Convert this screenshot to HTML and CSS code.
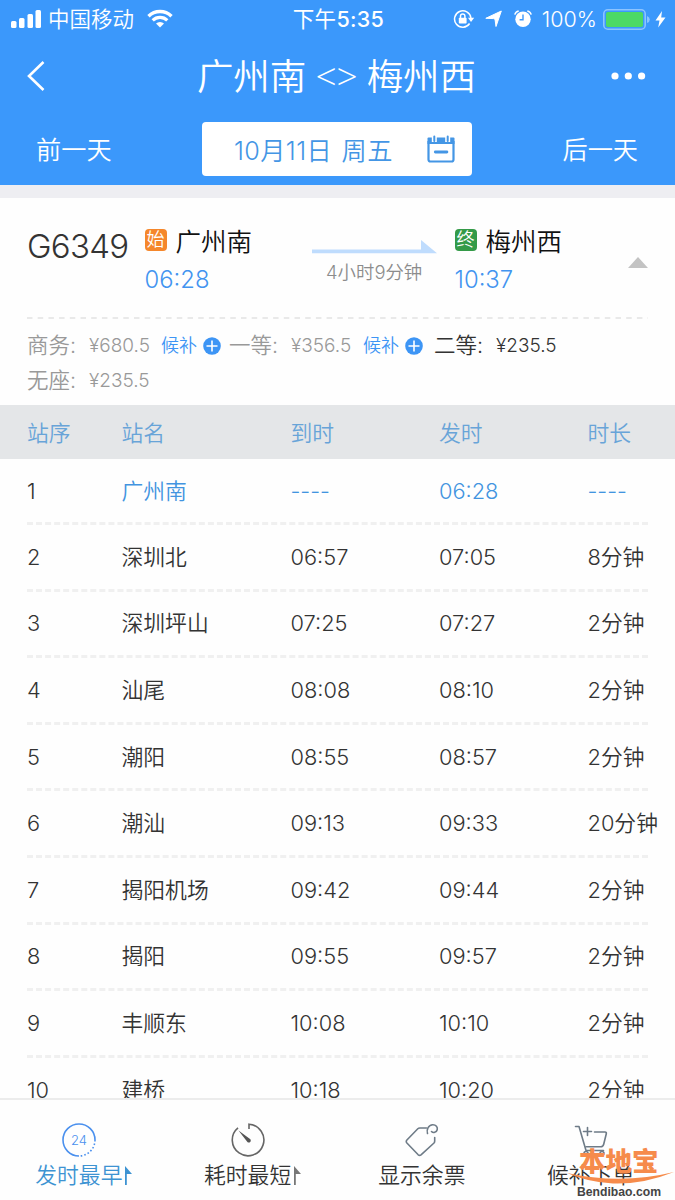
FILE: index.html
```html
<!DOCTYPE html>
<html lang="zh-CN">
<head>
  <meta charset="UTF-8" />
  <meta name="viewport" content="width=device-width, initial-scale=1.0"/>
  <title>广州南 - 梅州西</title>
  <link rel="stylesheet" href="styles.css">
</head>
<body>
  <div class="app">

    <header>
      <div class="status-bar">
        <div class="status-left">
          <svg width="31" height="19" viewBox="0 0 31 19" fill="#fff">
            <rect x="0" y="11" width="5.5" height="7" rx="1.5"/>
            <rect x="8" y="8" width="5.5" height="10" rx="1.5"/>
            <rect x="16.5" y="4" width="5.5" height="14" rx="1.5"/>
            <rect x="24.5" y="0" width="5.5" height="18" rx="1.5"/>
          </svg>
          <span class="carrier">中国移动</span>
          <svg class="wifi" width="26" height="19" viewBox="0 0 26 19" fill="none" stroke="#fff">
            <path d="M1.5 7.2a16.5 16.5 0 0 1 23 0" stroke-width="3.4"/>
            <path d="M5.7 11.4a10.4 10.4 0 0 1 14.6 0" stroke-width="3.2"/>
            <path d="M13 18.5l-4-4a5.8 5.8 0 0 1 8 0z" fill="#fff" stroke="none"/>
          </svg>
        </div>
        <div class="clock">下午<b>5:35</b></div>
        <div class="status-right">
          <svg class="lock" width="22" height="20" viewBox="0 0 22 20" fill="none" stroke="#fff" stroke-width="1.5">
            <path d="M16.6 14.5A8.2 8.2 0 1 1 17.9 9"/>
            <path d="M15 8.8h6.2L18 13z" fill="#fff" stroke="none"/>
            <rect x="5.8" y="8.8" width="7.8" height="5.8" rx=".8" fill="#fff" stroke="none"/>
            <path d="M7.5 9V7.1a2.2 2.2 0 0 1 4.4 0V9"/>
          </svg>
          <svg class="arrow" width="17" height="18" viewBox="0 0 17 18" fill="#fff" stroke="#fff" stroke-linejoin="round">
            <path d="M16.3 1L11 16.5 10 9.2 8.5 8.600.8 8.300z"/>
          </svg>
          <svg class="alarm" width="18" height="18" viewBox="0 0 18 18" fill="none" stroke="#fff">
            <circle cx="9" cy="9.3" r="7.7" fill="#fff" stroke="none"/>
            <path d="M9 4.5v5.3H5.6" stroke="#3b98fb" stroke-width="1.4"/>
            <path d="M.8 4.6Q1.5 1.7 4.7 1M17.2 4.6Q16.5 1.7 13.3 1" stroke-width="1.5"/>
          </svg>
          <span class="percent">100%</span>
          <svg class="battery" width="47" height="21" viewBox="0 0 47 21">
            <rect x=".8" y=".8" width="41.4" height="19.4" rx="4" fill="none" stroke="#8cc4ff" stroke-width="1.6"/>
            <rect x="3" y="3" width="37" height="15" rx="2" fill="#4cd964"/>
            <path d="M44 7q2.8 1 2.8 3.5T44 14z" fill="#8cc4ff"/>
          </svg>
          <svg class="bolt" width="11" height="17" viewBox="0 0 11 17" fill="#fff">
            <path d="M7 0L.5 9.5h4L3.2 16.5 10.5 6.6H6.2z"/>
          </svg>
        </div>
      </div>

      <div class="nav-bar">
        <svg width="18" height="30" viewBox="0 0 18 30" fill="none" stroke="#fff" stroke-width="2.6">
          <path d="M16.5 1L2 15l14.5 14"/>
        </svg>
        <h1>广州南<span>&lt;&gt;</span>梅州西</h1>
        <svg class="more" width="35" height="8" viewBox="0 0 35 8" fill="#fff">
          <circle cx="4" cy="4" r="3.6"/>
          <circle cx="17.3" cy="4" r="3.6"/>
          <circle cx="30.6" cy="4" r="3.6"/>
        </svg>
      </div>

      <div class="day-bar">
        <span>前一天</span>
        <div class="date-box">
          <span>10月11日 周五</span>
          <svg width="28" height="28" viewBox="0 0 28 28" fill="none" stroke="#4496e5">
            <path d="M1.5 6v18.5q0 2 2 2h21q2 0 2-2V6" stroke-width="2.2"/>
            <path d="M.5 9V3.500q0-1 1-1h25q1 0 1 1V9z" fill="#4496e5" stroke="none"/>
            <path d="M7.3 0v7M20.7 0v7" stroke="#fff" stroke-width="5"/>
            <path d="M7.3 1.5v4.5M20.7 1.5v4.5" stroke-width="2" stroke-linecap="round"/>
            <path d="M8.3 17h11.6" stroke-width="2.8" stroke-linecap="round"/>
          </svg>
        </div>
        <span>后一天</span>
      </div>
    </header>

    <section class="train">
      <div class="train-top">
        <div class="train-no">G6349</div>
        <div class="stop from">
          <div class="stop-name"><i class="tag start">始</i>广州南</div>
          <div class="stop-time">06:28</div>
        </div>
        <div class="duration">
          <svg width="125" height="14" viewBox="0 0 125 14" fill="#bfdcfd">
            <path d="M0 9.5h109V0l16 13.2H0z"/>
          </svg>
          <span>4小时9分钟</span>
        </div>
        <div class="stop to">
          <div class="stop-name"><i class="tag end">终</i>梅州西</div>
          <div class="stop-time">10:37</div>
        </div>
        <svg class="collapse" width="20" height="11" viewBox="0 0 20 11" fill="#c3c3c3">
          <path d="M0 11L10 0l10 11z"/>
        </svg>
      </div>

      <svg class="dash" width="621" height="2"><path d="M0 1h621" stroke="#e9e9e9" stroke-width="2" stroke-dasharray="5.5 5.2"/></svg>

      <div class="seats">
        <div class="seat">
          <span class="seat-type">商务:</span><span class="price">¥680.5</span><span class="wait">候补</span>
          <svg width="18" height="18" viewBox="0 0 18 18"><circle cx="9" cy="9" r="8.8" fill="#3d95f5"/><path d="M9 3.5v11M3.5 9h11" stroke="#fff" stroke-width="1.6"/></svg>
        </div>
        <div class="seat">
          <span class="seat-type">一等:</span><span class="price">¥356.5</span><span class="wait">候补</span>
          <svg width="18" height="18" viewBox="0 0 18 18"><circle cx="9" cy="9" r="8.8" fill="#3d95f5"/><path d="M9 3.5v11M3.5 9h11" stroke="#fff" stroke-width="1.6"/></svg>
        </div>
        <div class="seat available">
          <span class="seat-type">二等:</span><span class="price">¥235.5</span>
        </div>
        <div class="seat">
          <span class="seat-type">无座:</span><span class="price">¥235.5</span>
        </div>
      </div>
    </section>

    <main class="stations">
      <div class="row head"><span>站序</span><span>站名</span><span>到时</span><span>发时</span><span>时长</span></div>
      <div class="row first"><span class="num">1</span><span>广州南</span><span class="none">----</span><span>06:28</span><span class="none">----</span></div>
      <div class="row"><span>2</span><span>深圳北</span><span>06:57</span><span>07:05</span><span>8分钟</span></div>
      <div class="row"><span>3</span><span>深圳坪山</span><span>07:25</span><span>07:27</span><span>2分钟</span></div>
      <div class="row"><span>4</span><span>汕尾</span><span>08:08</span><span>08:10</span><span>2分钟</span></div>
      <div class="row"><span>5</span><span>潮阳</span><span>08:55</span><span>08:57</span><span>2分钟</span></div>
      <div class="row"><span>6</span><span>潮汕</span><span>09:13</span><span>09:33</span><span>20分钟</span></div>
      <div class="row"><span>7</span><span>揭阳机场</span><span>09:42</span><span>09:44</span><span>2分钟</span></div>
      <div class="row"><span>8</span><span>揭阳</span><span>09:55</span><span>09:57</span><span>2分钟</span></div>
      <div class="row"><span>9</span><span>丰顺东</span><span>10:08</span><span>10:10</span><span>2分钟</span></div>
      <div class="row"><span>10</span><span>建桥</span><span>10:18</span><span>10:20</span><span>2分钟</span></div>
    </main>

    <footer>
      <div class="tab active">
        <svg class="shift" width="34" height="34" viewBox="0 0 34 34" fill="none" stroke="#4a90ee" stroke-width="1.6">
          <path d="M17 33A16 16 0 1 1 33 17"/>
          <path d="M33 17A16 16 0 0 1 17 33" stroke-dasharray="1.6 2"/>
          <text x="17" y="21.7" text-anchor="middle" class="icon-text">24</text>
        </svg>
        <div class="label">发时最早<svg width="8" height="19" viewBox="0 0 8 19" fill="#3d93d2"><path d="M0 0l7 8H1.800v11H0z"/></svg></div>
      </div>
      <div class="tab">
        <svg class="shift" width="34" height="34" viewBox="0 0 34 34" fill="none" stroke="#666" stroke-width="1.6">
          <path d="M18 6V1.2A15.8 15.8 0 1 1 7 4.8"/>
          <path d="M7.500 7.500l11.200 8.200a2 2 0 1 1-2.700 2.700z" fill="#555" stroke="none"/>
        </svg>
        <div class="label">耗时最短<svg width="8" height="19" viewBox="0 0 8 19" fill="#777"><path d="M0 0l7 8H1.800v11H0z"/></svg></div>
      </div>
      <div class="tab">
        <svg width="34" height="34" viewBox="0 0 34 34" fill="none" stroke="#6e7b87" stroke-width="1.6" stroke-linecap="round" stroke-linejoin="round">
          <path d="M21.5 5H14.8q-1.2 0-2 .8L1.900 17q-1.300 1.500 0 3L13.200 31.800q1.400 1.200 2.800 0L29 20q.7-.8.7-2v-3.500"/>
          <path d="M22.500 10.500c-1.200-4 1-8.600 5.200-8.800 3.300-.1 5.200 2.500 4.500 5-.7 2.800-4 3.600-5.700 1.800"/>
        </svg>
        <div class="label">显示余票</div>
      </div>
      <div class="tab">
        <svg width="34" height="34" viewBox="0 0 34 34" fill="none" stroke="#6e7b87" stroke-width="1.6" stroke-linecap="round" stroke-linejoin="round">
          <path d="M1.500 3.500h3.500l7 24h17.500"/>
          <path d="M20.500 9H31q1.700 0 1.300 1.800l-2.600 10.400q-.6 2.500-3 2.500H12"/>
          <path d="M13.500 4.500v8M9.500 8.500h8"/>
          <circle cx="12" cy="30.500" r="2"/>
          <circle cx="28" cy="30.500" r="2"/>
        </svg>
        <div class="label">候补下单</div>
      </div>
    </footer>

    <div class="watermark">
      <div class="mark-name">本地宝</div>
      <svg width="108" height="14" viewBox="0 0 108 14"><path d="M0 2Q54 14 107 1Q76 13.500 46 12.500Q20 11 0 2z" fill="#f68b4b"/></svg>
      <div class="mark-url">Bendibao.com</div>
    </div>

  </div>
</body>
</html>
```
FILE: styles.css
```css
* {
  margin: 0;
  padding: 0;
  box-sizing: border-box;
}

body {
  font-family: Inter, "Noto Sans CJK SC", sans-serif;
  font-weight: 350;
  background: #fefefe;
  color: #333;
}

svg {
  display: block;
  flex-shrink: 0;
}

.app {
  position: relative;
  width: 675px;
  height: 1200px;
  overflow: hidden;
  display: flex;
  flex-direction: column;
}

/* header */
header {
  height: 185px;
  background: #3b98fb;
  color: #fff;
  flex-shrink: 0;
}

.status-bar {
  height: 38px;
  display: grid;
  grid-template-columns: 1fr auto 1fr;
  align-items: center;
  padding: 0 9px 0 11px;
}

.status-left,
.status-right {
  display: flex;
  align-items: center;
}

.carrier {
  font-size: 21.5px;
  line-height: 36px;
  margin: 0 13px 0 6px;
}

.wifi {
  margin-bottom: 2px;
}

.clock {
  font-size: 21.5px;
  line-height: 36px;
  letter-spacing: 0.3px;
  font-weight: 400;
}

.clock b {
  font-weight: 500;
}

.status-right {
  justify-content: flex-end;
}

.arrow {
  margin-left: 10px;
}

.alarm {
  margin-left: 12px;
}

.percent {
  font-size: 21.5px;
  margin: 0 6px 0 10px;
}

.bolt {
  margin-left: 5px;
}

.nav-bar {
  height: 76px;
  display: grid;
  grid-template-columns: 1fr auto 1fr;
  align-items: center;
  padding: 0 29px 0 27px;
}

h1 {
  font-size: 36.5px;
  font-weight: 350;
  line-height: 50px;
}

h1 span {
  margin: 0 9px;
  font-family: "Open Sans", sans-serif;
  font-size: 37px;
}

.more {
  justify-self: end;
}

.day-bar {
  height: 71px;
  display: flex;
  align-items: center;
  justify-content: space-between;
  padding: 0 37px 3px 36px;
  font-size: 25.200px;
}

.date-box {
  width: 270px;
  height: 54px;
  margin-top: 2px;
  border-radius: 4px;
  background: #fff;
  color: #4496e5;
  display: flex;
  align-items: center;
  justify-content: space-between;
  padding: 0 17px 0 32px;
}

.date-box span {
  letter-spacing: 0.4px;
  word-spacing: 2px;
}

/* train summary */
.train {
  height: 220px;
  border-top: 13px solid #eeeef2;
  padding: 0 27px;
  flex-shrink: 0;
}

.train-top {
  height: 119px;
  display: flex;
  align-items: flex-start;
}

.train-no {
  width: 118px;
  padding-top: 26px;
  font-size: 33px;
  line-height: 44px;
  letter-spacing: -0.7px;
}

.stop {
  padding-top: 25px;
}

.from {
  width: 168px;
}

.to {
  width: 173px;
  padding-left: 1px;
}

.stop-name {
  display: flex;
  align-items: center;
  font-size: 25.500px;
  line-height: 38px;
  color: #111;
}

.tag {
  width: 22px;
  height: 22px;
  margin: 0 9px 5px 0;
  border-radius: 4px;
  font-size: 18px;
  line-height: 21px;
  font-style: normal;
  text-align: center;
  color: #fff;
}

.start {
  background: #f5872b;
}

.end {
  background: #349a48;
}

.stop-time {
  font-size: 23.800px;
  line-height: 38px;
  color: #4294f0;
}

.duration {
  width: 142px;
  padding-top: 42px;
}

.duration span {
  display: block;
  padding-left: 14px;
  font-size: 18.400px;
  line-height: 37px;
  color: #8c8c8c;
}

.collapse {
  margin: 59px 0 0 2px;
}

.seats {
  display: grid;
  grid-template-columns: 202px 205px auto;
  grid-auto-rows: 35px;
  padding-top: 9px;
  color: #999;
}

.seat {
  display: flex;
  align-items: center;
  line-height: 35px;
}

.seat-type {
  width: 62px;
  font-size: 21.500px;
}

.price {
  width: 72px;
  font-size: 19px;
}

.wait {
  width: 42px;
  font-size: 18px;
  color: #3d95f5;
}

.available {
  color: #333;
}

/* stations */
.stations {
  flex: 1;
  overflow: hidden;
}

.row {
  height: 66.600px;
  margin-left: 27px;
  width: 621px;
  display: grid;
  grid-template-columns: 94.500px 169px 148.500px 148.500px 90px;
  align-items: center;
  font-size: 21.800px;
  line-height: 30px;
  border-bottom: 3px dashed #f0f0f0;
  white-space: nowrap;
}

.head {
  height: 54px;
  width: 675px;
  margin: 0;
  padding: 1px 0 0 27px;
  border: none;
  background: #e4e6e8;
  color: #68a4d8;
}

.first {
  height: 66px;
  color: #4294e0;
}

.num {
  color: #333;
}

/* bottom tabs */
footer {
  height: 102px;
  border-top: 2px solid #ececec;
  background: #fefefe;
  display: grid;
  grid-template-columns: repeat(4, 1fr);
  flex-shrink: 0;
}

.tab {
  display: flex;
  flex-direction: column;
  align-items: center;
  padding-top: 23px;
}

.shift {
  margin-right: 11px;
}

.label {
  display: flex;
  align-items: center;
  gap: 3px;
  margin-top: 1px;
  font-size: 21.800px;
  line-height: 34px;
}

.active {
  color: #3d93d2;
}

.icon-text {
  font-size: 13px;
  fill: #4a90ee;
  stroke: none;
}

.watermark {
  position: absolute;
  right: 0;
  bottom: 1px;
  width: 108px;
}

.mark-name {
  padding-left: 12px;
  font-size: 26.500px;
  line-height: 28px;
  font-weight: 900;
  color: #f68b4b;
}

.watermark svg {
  margin-top: -4px;
}

.mark-url {
  padding-left: 10px;
  font-family: "Liberation Sans", sans-serif;
  font-size: 12.200px;
  line-height: 14px;
  font-weight: bold;
  color: #444;
}
```
